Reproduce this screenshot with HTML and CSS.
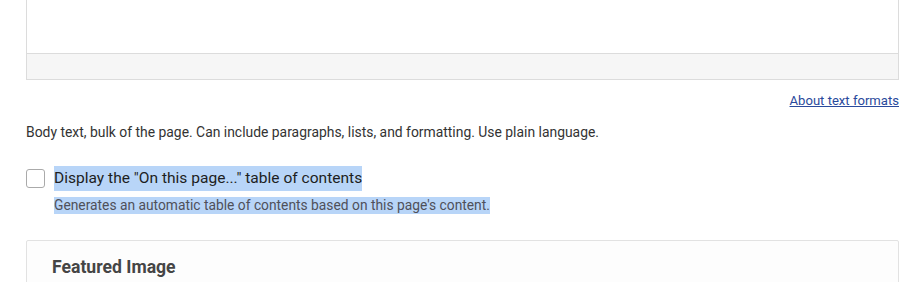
FILE: index.html
```html
<!DOCTYPE html>
<html lang="en">
<head>
<meta charset="utf-8">
<title>Edit</title>
<link rel="stylesheet" href="styles.css">
</head>
<body>
<div class="page">
  <div class="editor">
    <div class="editor-area"></div>
    <div class="editor-footer"></div>
  </div>
  <div class="formats"><a href="#" class="formats-link">About text formats</a></div>
  <p class="help">Body text, bulk of the page. Can include paragraphs, lists, and formatting. Use plain language.</p>
  <div class="check-row">
    <span class="checkbox"></span>
    <div class="check-text">
      <div><span class="label sel">Display the "On this page..." table of contents</span></div>
      <div><span class="desc sel">Generates an automatic table of contents based on this page's content.</span></div>
    </div>
  </div>
  <div class="panel">
    <h2 class="panel-title">Featured Image</h2>
  </div>
</div>
</body>
</html>
```
FILE: styles.css
```css
html, body {
  margin: 0;
  padding: 0;
  background: #fff;
}
body {
  font-family: Roboto, "Liberation Sans", sans-serif;
  color: #232429;
  overflow: hidden;
}
.page {
  padding: 0 16px 0 26px;
}
.editor {
  border: 1px solid #dcdcdc;
  border-top: none;
}
.editor-area {
  height: 53px;
  background: #fff;
}
.editor-footer {
  height: 25px;
  border-top: 1px solid #dcdcdc;
  background: #f6f6f6;
}
.formats {
  display: flex;
  justify-content: flex-end;
  margin-top: 13px;
  font-size: 13.1px;
  line-height: 16px;
}
.formats-link {
  color: #2a4a9c;
  text-decoration: underline;
}
.help {
  margin: 14px 0 0;
  font-size: 13.9px;
  line-height: 18px;
  color: #333;
}
.check-row {
  display: flex;
  align-items: flex-start;
  margin-top: 25px;
}
.checkbox {
  box-sizing: border-box;
  width: 19px;
  height: 19px;
  margin-top: 3px;
  border: 1px solid #aaa;
  border-radius: 3px;
  background: #fff;
  flex: none;
}
.check-text {
  margin-left: 9px;
}
.sel {
  background: #b8d5f8;
}
.label {
  display: inline-block;
  font-size: 15.55px;
  line-height: 25px;
  color: #1d1e22;
}
.desc {
  display: inline-block;
  margin-top: 6px;
  font-size: 13.8px;
  line-height: 17px;
  color: #4f505a;
}
.panel {
  margin-top: 26px;
  border: 1px solid #e2e2e2;
  border-radius: 2px;
  background: #fdfdfd;
  padding: 14px 25px 20px;
  height: 60px;
}
.panel-title {
  margin: 0;
  font-size: 17.6px;
  line-height: 24px;
  font-weight: 700;
  color: #454545;
}
```
